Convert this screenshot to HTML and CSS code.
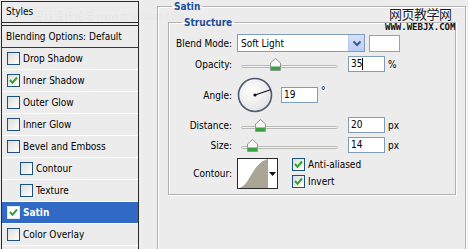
FILE: index.html
```html
<!DOCTYPE html>
<html lang="en">
<head>
    <meta charset="UTF-8">
    <meta name="viewport" content="width=device-width, initial-scale=1.0">
    <title>Layer Style - Satin</title>
    <link rel="stylesheet" href="styles.css">
</head>
<body>
    <div class="dialog">
        <!-- Styles list -->
        <div class="styles-panel">
            <div class="panel-head">Styles</div>
            <ul class="style-list">
                <li class="style-item first">Blending Options: Default</li>
                <li class="style-item"><span class="box"></span>Drop Shadow</li>
                <li class="style-item"><span class="box"><svg width="9" height="9" viewBox="0 0 9 9"><path d="M1 4 L3.5 6.8 L8 1.5" stroke="#2ea12e" stroke-width="2" fill="none"/></svg></span>Inner Shadow</li>
                <li class="style-item"><span class="box"></span>Outer Glow</li>
                <li class="style-item"><span class="box"></span>Inner Glow</li>
                <li class="style-item"><span class="box"></span>Bevel and Emboss</li>
                <li class="style-item sub"><span class="box"></span>Contour</li>
                <li class="style-item sub"><span class="box"></span>Texture</li>
                <li class="style-item active"><span class="box"><svg width="9" height="9" viewBox="0 0 9 9"><path d="M1 4 L3.5 6.8 L8 1.5" stroke="#2ea12e" stroke-width="2" fill="none"/></svg></span>Satin</li>
                <li class="style-item"><span class="box"></span>Color Overlay</li>
                <li class="style-item blank"></li>
            </ul>
        </div>

        <!-- Satin settings -->
        <div class="settings">
            <fieldset class="group group-outer">
                <legend>Satin</legend>
                <fieldset class="group group-inner">
                    <legend>Structure</legend>

                    <div class="row row-blend">
                        <span class="label">Blend Mode:</span>
                        <div class="select">
                            <span class="select-text">Soft Light</span>
                            <span class="select-btn"><svg width="10" height="7" viewBox="0 0 10 7"><path d="M1.5 1.5 L5 5 L8.5 1.5" stroke="#3d5a8c" stroke-width="2" fill="none"/></svg></span>
                        </div>
                        <span class="swatch"></span>
                    </div>

                    <div class="row row-slider">
                        <span class="label">Opacity:</span>
                        <div class="slider">
                            <span class="track"></span>
                            <span class="thumb" style="left: 29px;"><svg width="11" height="13" viewBox="0 0 11 13"><path d="M0.5 5 L5.5 0.5 L10.5 5 L10.5 12.5 L0.5 12.5 Z" fill="#f7f7f5" stroke="#8d9a8d"/><rect x="1" y="8.5" width="9" height="3.5" fill="#3f9f45"/></svg></span>
                        </div>
                        <span class="field">35<span class="caret"></span></span>
                        <span class="unit">%</span>
                    </div>

                    <div class="row row-angle">
                        <span class="label">Angle:</span>
                        <svg class="dial" width="36" height="36" viewBox="0 0 36 36">
                            <defs>
                                <radialGradient id="dialFill" cx="0.4" cy="0.35" r="0.7">
                                    <stop offset="0" stop-color="#ffffff"/>
                                    <stop offset="1" stop-color="#e2e2e2"/>
                                </radialGradient>
                            </defs>
                            <circle cx="18" cy="18" r="16.5" fill="url(#dialFill)" stroke="#4f5a6e" stroke-width="1.6"/>
                            <line x1="18" y1="18" x2="33.5" y2="12.7" stroke="#111" stroke-width="1.2"/>
                            <circle cx="18" cy="18" r="1.6" fill="#111"/>
                        </svg>
                        <span class="field field-angle">19</span>
                        <span class="unit degree">°</span>
                    </div>

                    <div class="row row-slider">
                        <span class="label">Distance:</span>
                        <div class="slider">
                            <span class="track"></span>
                            <span class="thumb" style="left: 14px;"><svg width="11" height="13" viewBox="0 0 11 13"><path d="M0.5 5 L5.5 0.5 L10.5 5 L10.5 12.5 L0.5 12.5 Z" fill="#f7f7f5" stroke="#8d9a8d"/><rect x="1" y="8.5" width="9" height="3.5" fill="#3f9f45"/></svg></span>
                        </div>
                        <span class="field">20</span>
                        <span class="unit">px</span>
                    </div>

                    <div class="row row-slider">
                        <span class="label">Size:</span>
                        <div class="slider">
                            <span class="track"></span>
                            <span class="thumb" style="left: 6px;"><svg width="11" height="13" viewBox="0 0 11 13"><path d="M0.5 5 L5.5 0.5 L10.5 5 L10.5 12.5 L0.5 12.5 Z" fill="#f7f7f5" stroke="#8d9a8d"/><rect x="1" y="8.5" width="9" height="3.5" fill="#3f9f45"/></svg></span>
                        </div>
                        <span class="field">14</span>
                        <span class="unit">px</span>
                    </div>

                    <div class="row row-contour">
                        <span class="label contour-label">Contour:</span>
                        <div class="contour">
                            <svg width="30" height="29" viewBox="0 0 30 29"><path d="M1 29 C 12 27, 14 4, 30 0 L30 29 Z" fill="#aba596"/></svg>
                            <span class="contour-arrow"><svg width="7" height="4" viewBox="0 0 7 4"><path d="M0 0 L7 0 L3.5 4 Z" fill="#111"/></svg></span>
                        </div>
                        <div class="options">
                            <label class="option"><span class="box"><svg width="9" height="9" viewBox="0 0 9 9"><path d="M1 4 L3.5 6.8 L8 1.5" stroke="#2ea12e" stroke-width="2" fill="none"/></svg></span>Anti-aliased</label>
                            <label class="option"><span class="box"><svg width="9" height="9" viewBox="0 0 9 9"><path d="M1 4 L3.5 6.8 L8 1.5" stroke="#2ea12e" stroke-width="2" fill="none"/></svg></span>Invert</label>
                        </div>
                    </div>
                </fieldset>
            </fieldset>
        </div>
    </div>

    <!-- watermarks -->
    <div class="mark-faint">思缘设计论坛 www.missyuan.com</div>
    <div class="mark">
        <div class="mark-cn">网页教学网</div>
        <div class="mark-url">WWW.WEBJX.COM</div>
    </div>
</body>
</html>
```

FILE: styles.css
```css
body {
    margin: 0;
    background-color: #ececec;
    color: #000000;
    font-family: "DejaVu Sans", Verdana, sans-serif;
    font-stretch: condensed;
    font-size: 10px;
    width: 468px;
    height: 249px;
    overflow: hidden;
    position: relative;
}

.dialog {
    display: flex;
    align-items: flex-start;
}

/* Styles list */

.styles-panel {
    width: 136px;
    margin: 1px 0 0 1px;
    border: 1px solid #2a2a2a;
    border-bottom: none;
}

.panel-head {
    height: 20px;
    line-height: 20px;
    padding-left: 4px;
    border-bottom: 1px solid #2a2a2a;
    margin-bottom: 2px;
}

.style-list {
    list-style: none;
    margin: 0;
    padding: 0;
    border-top: 1px solid #2a2a2a;
}

.style-item {
    display: flex;
    align-items: center;
    height: 21px;
    padding-left: 5px;
    border-bottom: 1px solid #ffffff;
}

.style-item.first {
    padding-left: 4px;
    border-bottom-color: #3a3a3a;
}

.style-item.sub {
    padding-left: 18px;
}

.style-item.active {
    background-color: #316ac5;
    color: #ffffff;
    font-weight: bold;
}

.box {
    width: 11px;
    height: 11px;
    border: 1px solid #1c5180;
    background: linear-gradient(135deg, #dcdcd7, #ffffff);
    margin-right: 3px;
    display: flex;
    align-items: center;
    justify-content: center;
    flex-shrink: 0;
}

.style-item.active .box {
    background: #ffffff;
    border-color: #dfe8f7;
}

/* Settings */

.settings {
    flex-grow: 1;
    padding: 0 2px 0 18px;
}

.group {
    margin: 0;
    border: 1px solid #b2b2b2;
    box-shadow: 1px 1px 0 #ffffff, inset 1px 1px 0 #ffffff;
}

.group legend {
    color: #1e4f9c;
    font-weight: bold;
    line-height: 13px;
    padding: 0 2px;
}

.group-outer {
    height: 270px;
    padding: 0;
}

.group-outer > legend {
    margin-left: 14px;
}

.group-inner {
    margin: 3px 9px 0 10px;
    padding: 5px 0 5px 0;
}

.group-inner > legend {
    margin-left: 13px;
}

.row {
    display: flex;
    align-items: center;
}

.label {
    width: 63px;
    margin-right: 5px;
    text-align: right;
}

.row-blend {
    height: 18px;
}

.row-slider {
    height: 16px;
    margin-top: 4px;
}

.row-angle {
    height: 36px;
    margin-top: 5px;
}

.row-angle + .row-slider {
    margin-top: 4px;
}

.row-contour {
    height: 31px;
    margin-top: 5px;
    align-items: flex-start;
}

.contour-label {
    align-self: center;
}

.select {
    width: 126px;
    height: 16px;
    border: 1px solid #7f9db9;
    background-color: #ffffff;
    display: flex;
    align-items: center;
    justify-content: space-between;
}

.select-text {
    padding-left: 3px;
}

.select-btn {
    width: 15px;
    height: 16px;
    background: linear-gradient(#d5e1fb, #b9cdf5);
    border-left: 1px solid #b6c8ee;
    display: flex;
    align-items: center;
    justify-content: center;
}

.swatch {
    width: 29px;
    height: 15px;
    margin-left: 4px;
    border: 1px solid #a0a0a0;
    background-color: #ffffff;
}

.slider {
    position: relative;
    width: 97px;
    height: 16px;
    margin-left: 4px;
    margin-right: 10px;
}

.track {
    position: absolute;
    left: 0;
    right: 0;
    top: 9px;
    height: 1px;
    border: 1px solid #b8b8b4;
    border-radius: 2px;
    background-color: #f4f4f0;
}

.thumb {
    position: absolute;
    top: 2px;
    height: 13px;
    display: flex;
}

.field {
    width: 33px;
    height: 14px;
    line-height: 14px;
    padding-left: 2px;
    border: 1px solid #7f9db9;
    background-color: #ffffff;
    display: flex;
    align-items: center;
}

.caret {
    width: 1px;
    height: 12px;
    background-color: #000000;
}

.unit {
    margin-left: 3px;
}

.dial {
    display: block;
}

.field-angle {
    margin-left: 8px;
}

.degree {
    align-self: flex-start;
    margin-top: 8px;
}

.contour {
    width: 39px;
    height: 29px;
    border: 1px solid #2a2a2a;
    background-color: #ffffff;
    display: flex;
}

.contour svg {
    display: block;
}

.contour-arrow {
    width: 9px;
    display: flex;
    align-items: center;
    justify-content: center;
}

.options {
    margin-left: 14px;
    display: flex;
    flex-direction: column;
    gap: 4px;
}

.option {
    display: flex;
    align-items: center;
    height: 13px;
}

/* Watermarks */

.mark-faint {
    position: absolute;
    left: 34px;
    top: 8px;
    font-size: 10px;
    font-stretch: normal;
    color: rgba(0, 0, 0, 0.05);
    font-family: "Liberation Sans", "Noto Sans CJK SC", sans-serif;
    white-space: nowrap;
}

.mark {
    position: absolute;
    left: 385px;
    top: 6px;
    text-align: center;
}

.mark-cn {
    font-family: "Noto Sans CJK SC", sans-serif;
    font-size: 13px;
    line-height: 16px;
    letter-spacing: -0.5px;
    color: #1a1a1a;
    text-shadow: 0 0 2px #ffffff, 0 0 2px #ffffff;
}

.mark-url {
    font-family: "DejaVu Sans Mono", monospace;
    font-weight: bold;
    font-size: 9px;
    line-height: 10px;
    color: #111111;
}
```
